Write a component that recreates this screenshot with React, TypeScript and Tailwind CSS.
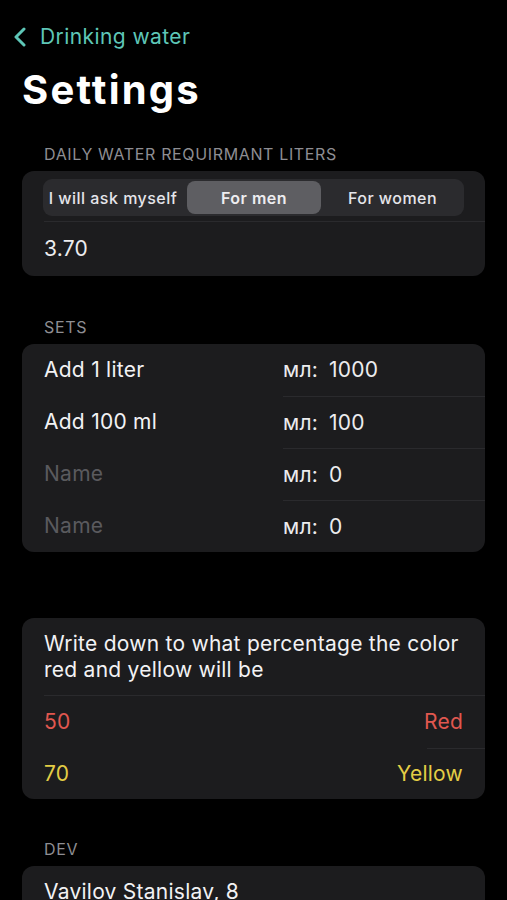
import React from "react";

const font = { fontFamily: "Inter, 'Noto Sans', sans-serif" };

function Header({ children, className = "" }: { children: React.ReactNode; className?: string }) {
  return (
    <div className={`pl-[44px] text-[16px] leading-[20px] tracking-[0.04em] text-[#8e8e93] uppercase ${className}`}>
      {children}
    </div>
  );
}

export default function App() {
  const sets = [
    { name: "Add 1 liter", ml: "1000", placeholder: false },
    { name: "Add 100 ml", ml: "100", placeholder: false },
    { name: "Name", ml: "0", placeholder: true },
    { name: "Name", ml: "0", placeholder: true },
  ];
  return (
    <div className="min-h-[900px] bg-black text-white overflow-hidden tracking-[0.016em]" style={font}>
      <div className="mx-[22px]">
        {/* nav */}
        <div className="mt-[15px] h-[44px] flex items-center -ml-[10px] text-[#5ec6b7]">
          <svg width="16" height="20" viewBox="0 0 16 20" className="mr-[12px]">
            <polyline points="12,2 4,10 12,18" fill="none" stroke="#5ec6b7" strokeWidth="3" strokeLinecap="round" strokeLinejoin="round" />
          </svg>
          <span className="text-[21px] leading-[44px] tracking-[0.02em]">Drinking water</span>
        </div>
        {/* title */}
        <div className="mt-[7px] h-[48px] text-[40px] leading-[48px] font-bold tracking-[0.055em]">Settings</div>
      </div>

      <Header className="mt-[30px]">Daily water requirmant liters</Header>
      <div className="mx-[22px] mt-[7px] rounded-[12px] bg-[#1c1c1e]">
        <div className="pt-[8px] pb-[5px] px-[21px]">
          <div className="h-[37px] rounded-[9px] bg-[#2b2b2e] flex items-center text-[16px] font-medium tracking-[0.03em]">
            <div className="w-[144px] h-full flex items-center justify-center text-[#e5e5ea] pr-[4px]">I will ask myself</div>
            <div className="w-[134px] h-[33px] rounded-[8px] bg-[#5e5e62] flex items-center justify-center font-semibold text-[#ededf0]">For men</div>
            <div className="flex-1 h-full flex items-center justify-center text-[#e5e5ea]">For women</div>
          </div>
        </div>
        <div className="ml-[22px] h-[1px] bg-[#2a2a2d]" />
        <div className="h-[54px] flex items-center px-[22px] text-[21px] text-[#ececee]">3.70</div>
      </div>

      <Header className="mt-[41px]">Sets</Header>
      <div className="mx-[22px] mt-[7px] rounded-[12px] bg-[#1c1c1e] overflow-hidden">
        {sets.map((s, i) => (
          <div key={i} className="flex h-[52px] pl-[22px] text-[21px]">
            <div className={`w-[239px] flex items-center ${s.placeholder ? "text-[#5a5a5e]" : "text-[#f2f2f4]"}`}>{s.name}</div>
            <div className={`flex-1 flex items-center text-[#ececee] ${i > 0 ? "border-t border-[#2a2a2d]" : ""}`}>
              <span className="w-[46px]">мл:</span>
              <span>{s.ml}</span>
            </div>
          </div>
        ))}
      </div>

      <div className="mx-[22px] mt-[66px] rounded-[12px] bg-[#1c1c1e] overflow-hidden">
        <div className="px-[22px] pt-[13px] pb-[12px] text-[21px] leading-[26px] text-[#f2f2f4]">
          Write down to what percentage the color
          <br />
          red and yellow will be
        </div>
        <div className="ml-[22px] h-[1px] bg-[#2a2a2d]" />
        <div className="h-[52px] flex items-center justify-between px-[22px] text-[21px] text-[#e0574f]">
          <span>50</span>
          <span>Red</span>
        </div>
        <div className="ml-[405px] h-[1px] bg-[#2a2a2d]" />
        <div className="h-[50px] flex items-center justify-between px-[22px] text-[21px] text-[#e3cd45]">
          <span>70</span>
          <span>Yellow</span>
        </div>
      </div>

      <Header className="mt-[40px]">Dev</Header>
      <div className="mx-[22px] mt-[7px] rounded-[12px] bg-[#1c1c1e] overflow-hidden">
        <div className="h-[52px] flex items-center px-[22px] text-[21px] text-[#f2f2f4]">Vavilov Stanislav, 8</div>
      </div>
    </div>
  );
}
